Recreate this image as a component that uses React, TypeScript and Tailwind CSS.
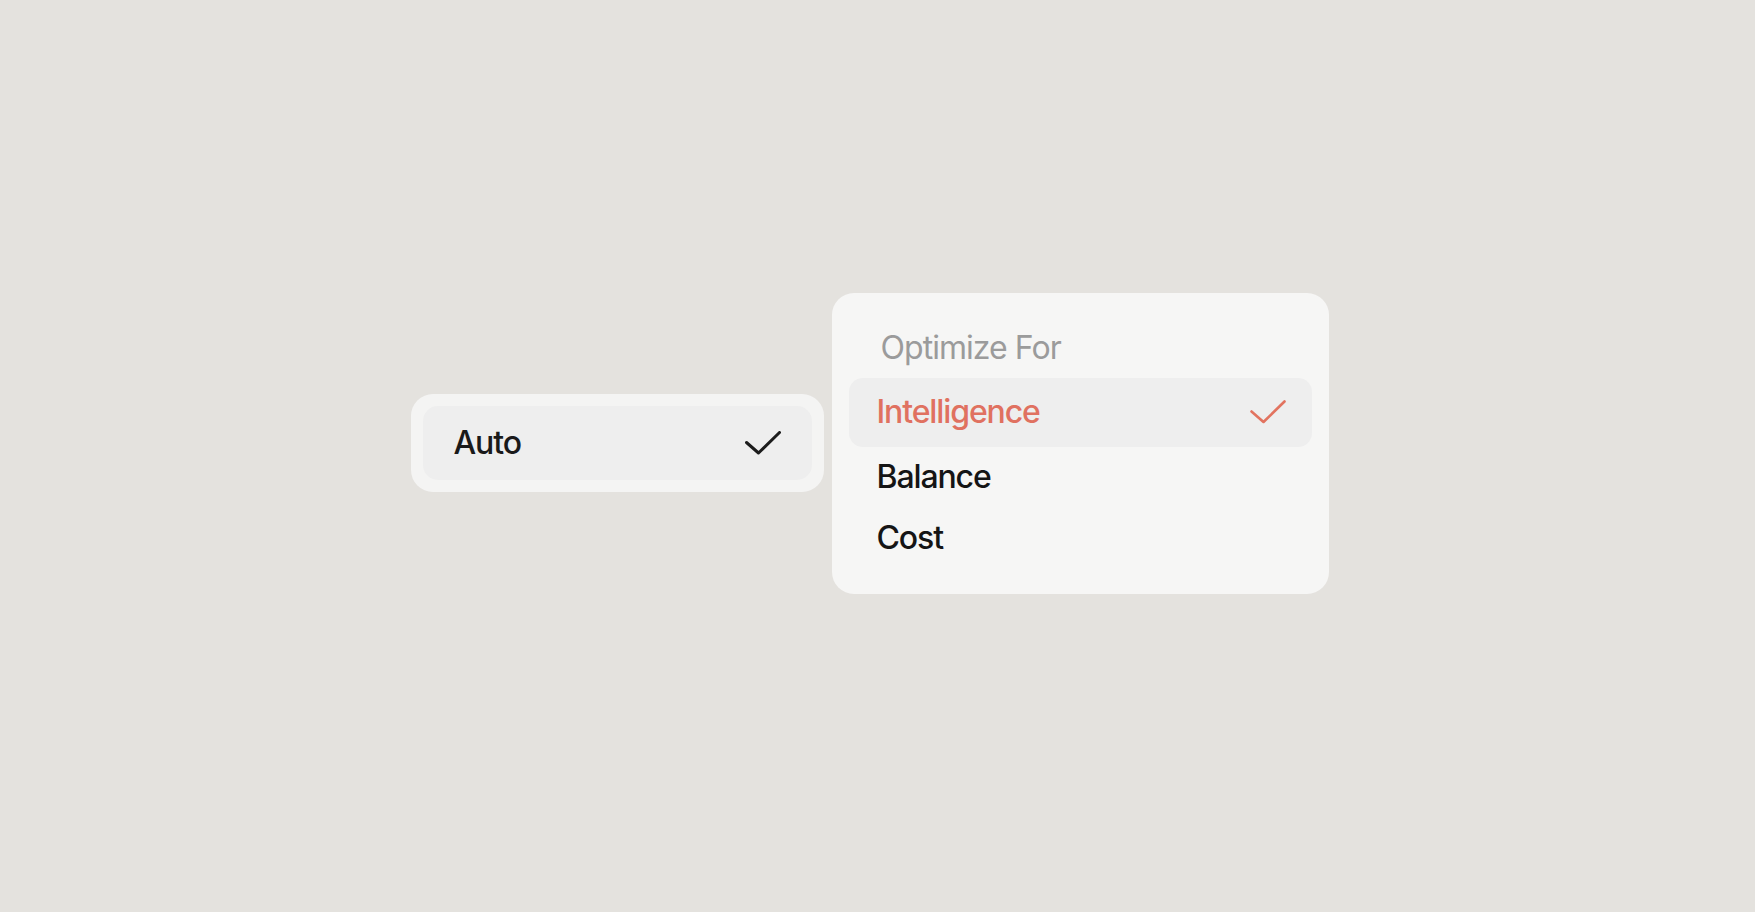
import { useState } from "react";

const options = ["Intelligence", "Balance", "Cost"];

const Check = ({ color, width }: { color: string; width: number }) => (
  <svg width="36" height="24" viewBox="0 0 36 24" fill="none">
    <polyline
      points="1.5,11.5 13.5,22 34.5,1.5"
      stroke={color}
      strokeWidth={width}
      strokeLinecap="round"
      strokeLinejoin="round"
    />
  </svg>
);

const App = () => {
  const [selected, setSelected] = useState("Intelligence");

  return (
    <div
      className="min-h-screen w-full bg-[#e4e2de] flex items-center justify-center pb-[26px] pr-[16px]"
      style={{ fontFamily: "Inter, 'Noto Sans', sans-serif" }}
    >
      <div className="flex items-center gap-[8px]">
        {/* trigger */}
        <div className="w-[413px] rounded-[22px] bg-[#f4f4f3] p-[12px]">
          <div className="h-[74px] rounded-[15px] bg-[#eeeeee] flex items-center justify-between pl-[31px] pr-[31px]">
            <span className="text-[32px] font-medium tracking-[-0.035em] text-[#1a1a1a]">
              Auto
            </span>
            <Check color="#1c1c1c" width={3} />
          </div>
        </div>

        {/* menu */}
        <div className="w-[497px] rounded-[22px] bg-[#f6f6f5] px-[17px] pt-[26px] pb-[25px]">
          <div className="h-[59px] flex items-center pl-[32px] text-[32px] tracking-[-0.03em] text-[#9b9b9b]">
            Optimize For
          </div>
          {options.map((opt, i) => {
            const active = opt === selected;
            return (
              <div
                key={opt}
                onClick={() => setSelected(opt)}
                className={
                  active
                    ? "h-[69px] rounded-[14px] bg-[#eeeeee] flex items-center justify-between pl-[28px] pr-[26px] cursor-pointer"
                    : i === 1
                      ? "h-[60px] flex items-center justify-between pl-[28px] pr-[26px] cursor-pointer"
                      : "h-[62px] flex items-center justify-between pl-[28px] pr-[26px] cursor-pointer"
                }
              >
                <span
                  className={
                    active
                      ? "text-[32px] font-medium tracking-[-0.035em] text-[#e07160]"
                      : "text-[32px] font-medium tracking-[-0.035em] text-[#151515]"
                  }
                >
                  {opt}
                </span>
                {active && <Check color="#e2735f" width={2.6} />}
              </div>
            );
          })}
        </div>
      </div>
    </div>
  );
};

export default App;
